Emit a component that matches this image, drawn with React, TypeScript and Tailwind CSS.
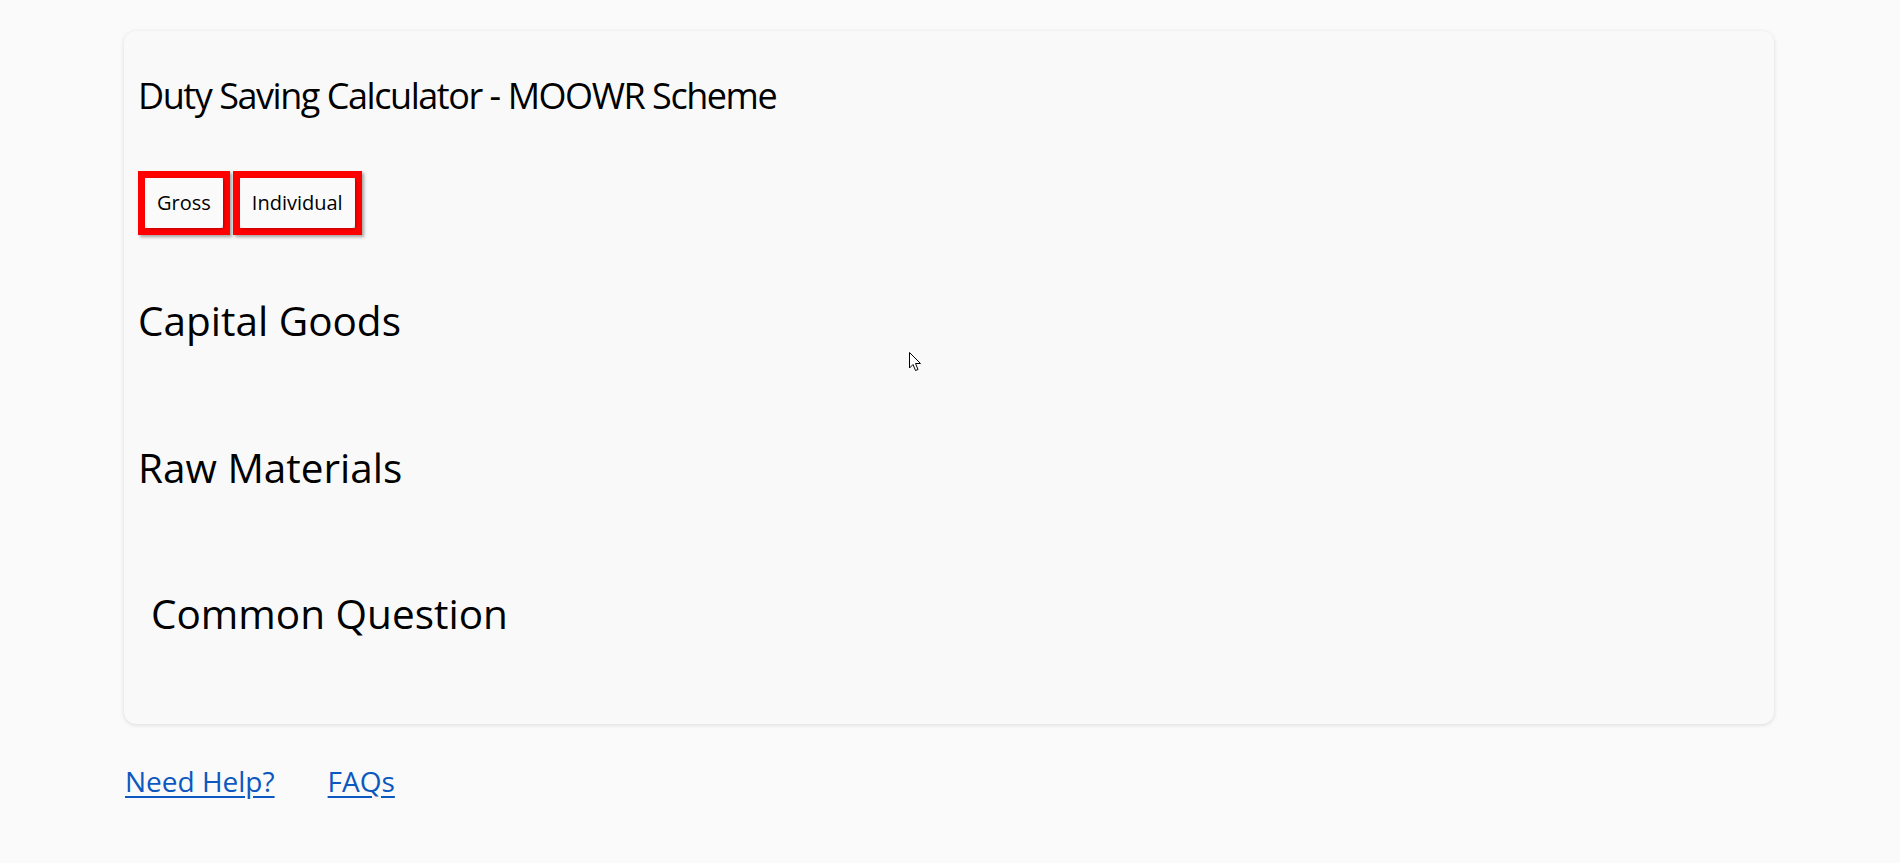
import React from "react";

const font = { fontFamily: '"Open Sans", "Noto Sans", sans-serif' } as const;

function ToggleButton({ label }: { label: string }) {
  return (
    <div className="border-[7px] border-[#ff0000] shadow-[2px_2px_3px_rgba(0,0,0,0.35)]">
      <button className="h-[50px] px-[12px] flex items-center bg-[#fafafa] rounded-[4px] shadow-[1px_1px_3px_rgba(0,0,0,0.3)] text-[20px] text-black leading-none">
        {label}
      </button>
    </div>
  );
}

export default function App() {
  return (
    <div className="min-h-screen bg-[#fafafa] relative" style={font}>
      <div className="pt-[31px] pl-[124px]">
        <div className="w-[1650px] h-[693px] bg-[#f9f9f9] rounded-[12px] shadow-[0_1px_4px_rgba(0,0,0,0.13)] pt-[43px] px-[14px]">
          <h1 className="text-[36px] leading-[44px] tracking-[-1.45px] text-black font-medium">
            Duty Saving Calculator - MOOWR Scheme
          </h1>
          <div className="mt-[53px] flex gap-[3px]">
            <ToggleButton label="Gross" />
            <ToggleButton label="Individual" />
          </div>
          <h2 className="mt-[60px] text-[40.5px] leading-[52px] text-black">Capital Goods</h2>
          <h2 className="mt-[95px] text-[40.5px] leading-[52px] text-black">Raw Materials</h2>
          <h2 className="mt-[94px] ml-[13px] text-[40.5px] leading-[52px] text-black">Common Question</h2>
        </div>
        <div className="mt-[38px] pl-[1px] flex gap-[53px] text-[28px] leading-[38px]">
          <a href="#" className="text-[#0b58c0] underline underline-offset-[4px]">Need Help?</a>
          <a href="#" className="text-[#0b58c0] underline underline-offset-[4px]">FAQs</a>
        </div>
      </div>
      <svg
        className="absolute left-[909px] top-[352px]"
        width="13"
        height="20"
        viewBox="0 0 13 20"
      >
        <path
          d="M0.5 0.5 L0.5 16 L4 12.5 L6.5 18.5 L9 17.5 L6.5 11.5 L11.5 11.5 Z"
          fill="#fff"
          stroke="#000"
          strokeWidth="1"
        />
      </svg>
    </div>
  );
}
